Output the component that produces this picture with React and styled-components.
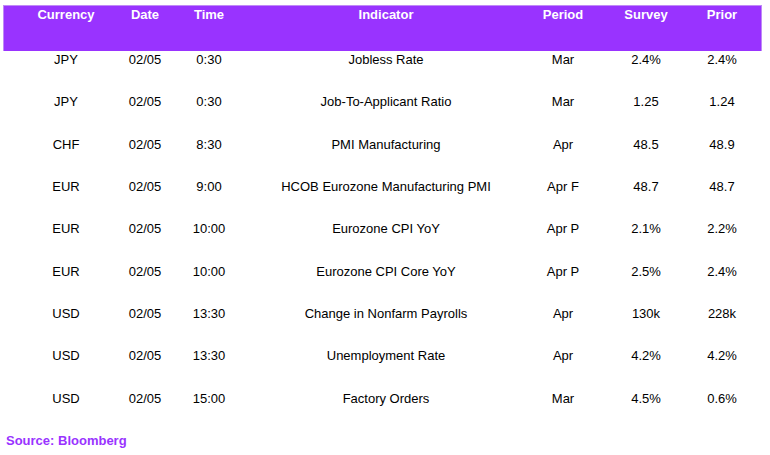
import React from "react";
import styled, { createGlobalStyle } from "styled-components";

const Global = createGlobalStyle`
  html, body { margin: 0; padding: 0; background: #ffffff; }
  body { font-family: "Liberation Sans", Arial, sans-serif; }
`;

const Page = styled.div`
  width: 770px;
  height: 455px;
  padding: 5px 0 0 3px;
  box-sizing: border-box;
  font-family: "Liberation Sans", Arial, sans-serif;
`;

const Table = styled.div`
  width: 759px;
  display: flex;
  flex-direction: column;
`;

const cols = "112px 46px 82px 272px 82px 84px 68px";

const HeaderRow = styled.div`
  display: grid;
  grid-template-columns: ${cols};
  padding: 1.5px 6px 0 7px;
  height: 46px;
  box-sizing: border-box;
  background: #9933ff;
  box-shadow: inset 1px 1px 0 #c08af7, inset -1px 0 0 #c08af7;
  color: #ffffff;
  font-weight: bold;
  font-size: 13px;
  line-height: 15px;
`;

const Row = styled.div`
  display: grid;
  grid-template-columns: ${cols};
  padding: 1.2px 6px 0 7px;
  height: 42.3px;
  box-sizing: border-box;
  color: #000000;
  font-size: 13px;
  line-height: 15px;
`;

const Cell = styled.div`
  text-align: center;
  white-space: nowrap;
`;

const Source = styled.div`
  margin: 1.5px 0 0 3px;
  color: #9933ff;
  font-weight: bold;
  font-size: 13px;
  line-height: 15px;
`;

const headers = ["Currency", "Date", "Time", "Indicator", "Period", "Survey", "Prior"];

const data = [
  ["JPY", "02/05", "0:30", "Jobless Rate", "Mar", "2.4%", "2.4%"],
  ["JPY", "02/05", "0:30", "Job-To-Applicant Ratio", "Mar", "1.25", "1.24"],
  ["CHF", "02/05", "8:30", "PMI Manufacturing", "Apr", "48.5", "48.9"],
  ["EUR", "02/05", "9:00", "HCOB Eurozone Manufacturing PMI", "Apr F", "48.7", "48.7"],
  ["EUR", "02/05", "10:00", "Eurozone CPI YoY", "Apr P", "2.1%", "2.2%"],
  ["EUR", "02/05", "10:00", "Eurozone CPI Core YoY", "Apr P", "2.5%", "2.4%"],
  ["USD", "02/05", "13:30", "Change in Nonfarm Payrolls", "Apr", "130k", "228k"],
  ["USD", "02/05", "13:30", "Unemployment Rate", "Apr", "4.2%", "4.2%"],
  ["USD", "02/05", "15:00", "Factory Orders", "Mar", "4.5%", "0.6%"],
];

export default function App() {
  return (
    <Page>
      <Global />
      <Table>
        <HeaderRow>
          {headers.map((h) => (
            <Cell key={h}>{h}</Cell>
          ))}
        </HeaderRow>
        {data.map((r, i) => (
          <Row key={i}>
            {r.map((c, j) => (
              <Cell key={j}>{c}</Cell>
            ))}
          </Row>
        ))}
      </Table>
      <Source>Source: Bloomberg</Source>
    </Page>
  );
}
